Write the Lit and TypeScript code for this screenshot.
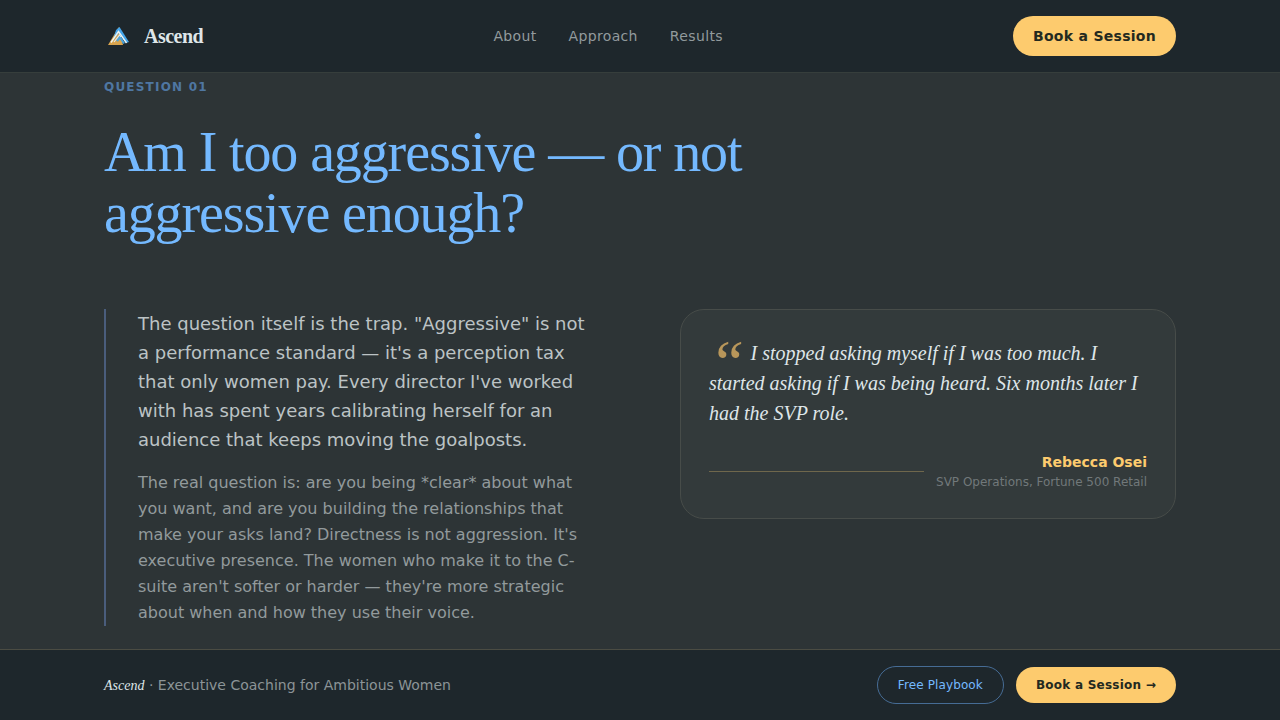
import { LitElement, html, css } from "lit";
import { customElement } from "lit/decorators.js";

@customElement("app-root")
export class AppRoot extends LitElement {
  static styles = css`
    :host {
      display: flex;
      flex-direction: column;
      min-height: 100vh;
      background: #2d3436;
      color: #dfe6e9;
      font-family: "DejaVu Sans", sans-serif;
      font-size: 14px;
      line-height: 20px;
    }
    * {
      box-sizing: border-box;
    }
    h1,
    p,
    blockquote,
    figure {
      margin: 0;
    }
    a {
      color: inherit;
      text-decoration: none;
    }
    button {
      font-family: inherit;
      cursor: pointer;
    }
    .wrap {
      width: 100%;
      max-width: 1120px;
      margin: 0 auto;
      padding: 0 24px;
    }
    .header {
      background: #1e272c;
      border-bottom: 1px solid #363e3c;
    }
    .bar {
      display: flex;
      align-items: center;
      justify-content: space-between;
      gap: 24px;
      padding-top: 16px;
      padding-bottom: 16px;
    }
    .brand {
      display: flex;
      align-items: center;
      gap: 12px;
      font: 700 20px/28px "Liberation Serif", serif;
      letter-spacing: -0.025em;
    }
    .logo {
      width: 28px;
      height: 28px;
    }
    .nav {
      display: flex;
      gap: 32px;
      color: #929a9d;
      letter-spacing: 0.025em;
    }
    .btn {
      border: 0;
      border-radius: 999px;
      background: #fdcb6e;
      color: #23291f;
      padding: 10px 20px;
      font-size: 14px;
      line-height: 20px;
      font-weight: 700;
      letter-spacing: 0.02em;
    }
    .small {
      padding: 10px 20px;
      font-size: 12px;
      line-height: 16px;
    }
    .ghost {
      border: 1px solid #466c95;
      background: transparent;
      color: #74b9ff;
      font-weight: 400;
      letter-spacing: 0.01em;
    }
    .main {
      flex: 1;
      padding-bottom: 22px;
    }
    .label {
      padding-top: 6px;
      font-size: 12px;
      line-height: 16px;
      font-weight: 700;
      letter-spacing: 0.1em;
      color: #4f77a2;
    }
    .title {
      max-width: 768px;
      margin-top: 27px;
      font: 400 56px/61px "Liberation Serif", serif;
      letter-spacing: -0.02em;
      color: #74b9ff;
    }
    .columns {
      display: grid;
      grid-template-columns: 1fr 1fr;
      align-items: start;
      gap: 80px;
      margin-top: 65px;
    }
    .answer {
      display: grid;
      gap: 16px;
      border-left: 2px solid #4a5d7c;
      padding-left: 32px;
      font-size: 16px;
      line-height: 26px;
      color: #929a9c;
    }
    .lead {
      font-size: 18px;
      line-height: 29px;
      color: #bcc3c5;
    }
    .card {
      border: 1px solid #474c49;
      border-radius: 24px;
      background: #333a3b;
      padding: 28px;
    }
    .quote {
      font: italic 400 20px/30px "Liberation Serif", serif;
    }
    .mark {
      margin-right: 6px;
      font-size: 64px;
      line-height: 0;
      vertical-align: -24px;
      color: #b8965a;
    }
    .credit {
      display: flex;
      align-items: center;
      gap: 12px;
      margin-top: 24px;
      text-align: right;
    }
    .rule {
      flex: 1;
      height: 1px;
      background: #6f674c;
    }
    .name {
      font-weight: 700;
      color: #fdcb6e;
    }
    .role {
      margin-top: 2px;
      font-size: 12px;
      line-height: 16px;
      color: #71787a;
    }
    .footer {
      background: #1e272c;
      border-top: 1px solid #4b4c43;
    }
    .tagline {
      color: #8c9497;
    }
    .tagline em {
      font-family: "Liberation Serif", serif;
      color: #dfe6e9;
    }
    .actions {
      display: flex;
      align-items: center;
      gap: 12px;
    }
  `;

  render() {
    return html`
      <header class="header">
        <div class="wrap bar">
          <a class="brand" href="#">
            <svg class="logo" viewBox="0 0 28 28" aria-hidden="true">
              <path d="M4 23 L13.500 7 L15 5 L17 14 L19 23 Z" fill="#d9a44e" />
              <path d="M12 8 L15.500 5 L25 20 L22 21 L19 17 L15 11 L9 18 Z" fill="#45a5ea" />
              <path d="M7 20.500 L14.500 9.500 L22.500 21" fill="none" stroke="#eef5f4" stroke-width="1.400" />
              <path d="M13 19 L16 15 L20 21.500" fill="none" stroke="#4aa3dc" stroke-width="2.200" />
              <path d="M10 20 L15.500 13 L17 15" fill="none" stroke="#dfeaf0" stroke-width="1.200" />
            </svg>
            <span>Ascend</span>
          </a>
          <nav class="nav">
            <a href="#about">About</a>
            <a href="#approach">Approach</a>
            <a href="#results">Results</a>
          </nav>
          <button class="btn" type="button">Book a Session</button>
        </div>
      </header>
      <main class="main">
        <div class="wrap">
          <p class="label">QUESTION 01</p>
          <h1 class="title">Am I too aggressive — or not aggressive enough?</h1>
          <div class="columns">
            <div class="answer">
              <p class="lead">
                The question itself is the trap. "Aggressive" is not a performance standard — it's a
                perception tax that only women pay. Every director I've worked with has spent years
                calibrating herself for an audience that keeps moving the goalposts.
              </p>
              <p>
                The real question is: are you being *clear* about what you want, and are you building
                the relationships that make your asks land? Directness is not aggression. It's
                executive presence. The women who make it to the C-suite aren't softer or harder —
                they're more strategic about when and how they use their voice.
              </p>
            </div>
            <figure class="card">
              <blockquote class="quote"><span class="mark">“</span>I stopped asking myself if I was too much. I started asking if I was being heard. Six months later I had the SVP role.</blockquote>
              <figcaption class="credit">
                <span class="rule"></span>
                <div>
                  <p class="name">Rebecca Osei</p>
                  <p class="role">SVP Operations, Fortune 500 Retail</p>
                </div>
              </figcaption>
            </figure>
          </div>
        </div>
      </main>
      <footer class="footer">
        <div class="wrap bar">
          <p class="tagline"><em>Ascend</em> · Executive Coaching for Ambitious Women</p>
          <div class="actions">
            <button class="btn small ghost" type="button">Free Playbook</button>
            <button class="btn small" type="button">Book a Session →</button>
          </div>
        </div>
      </footer>
    `;
  }
}
